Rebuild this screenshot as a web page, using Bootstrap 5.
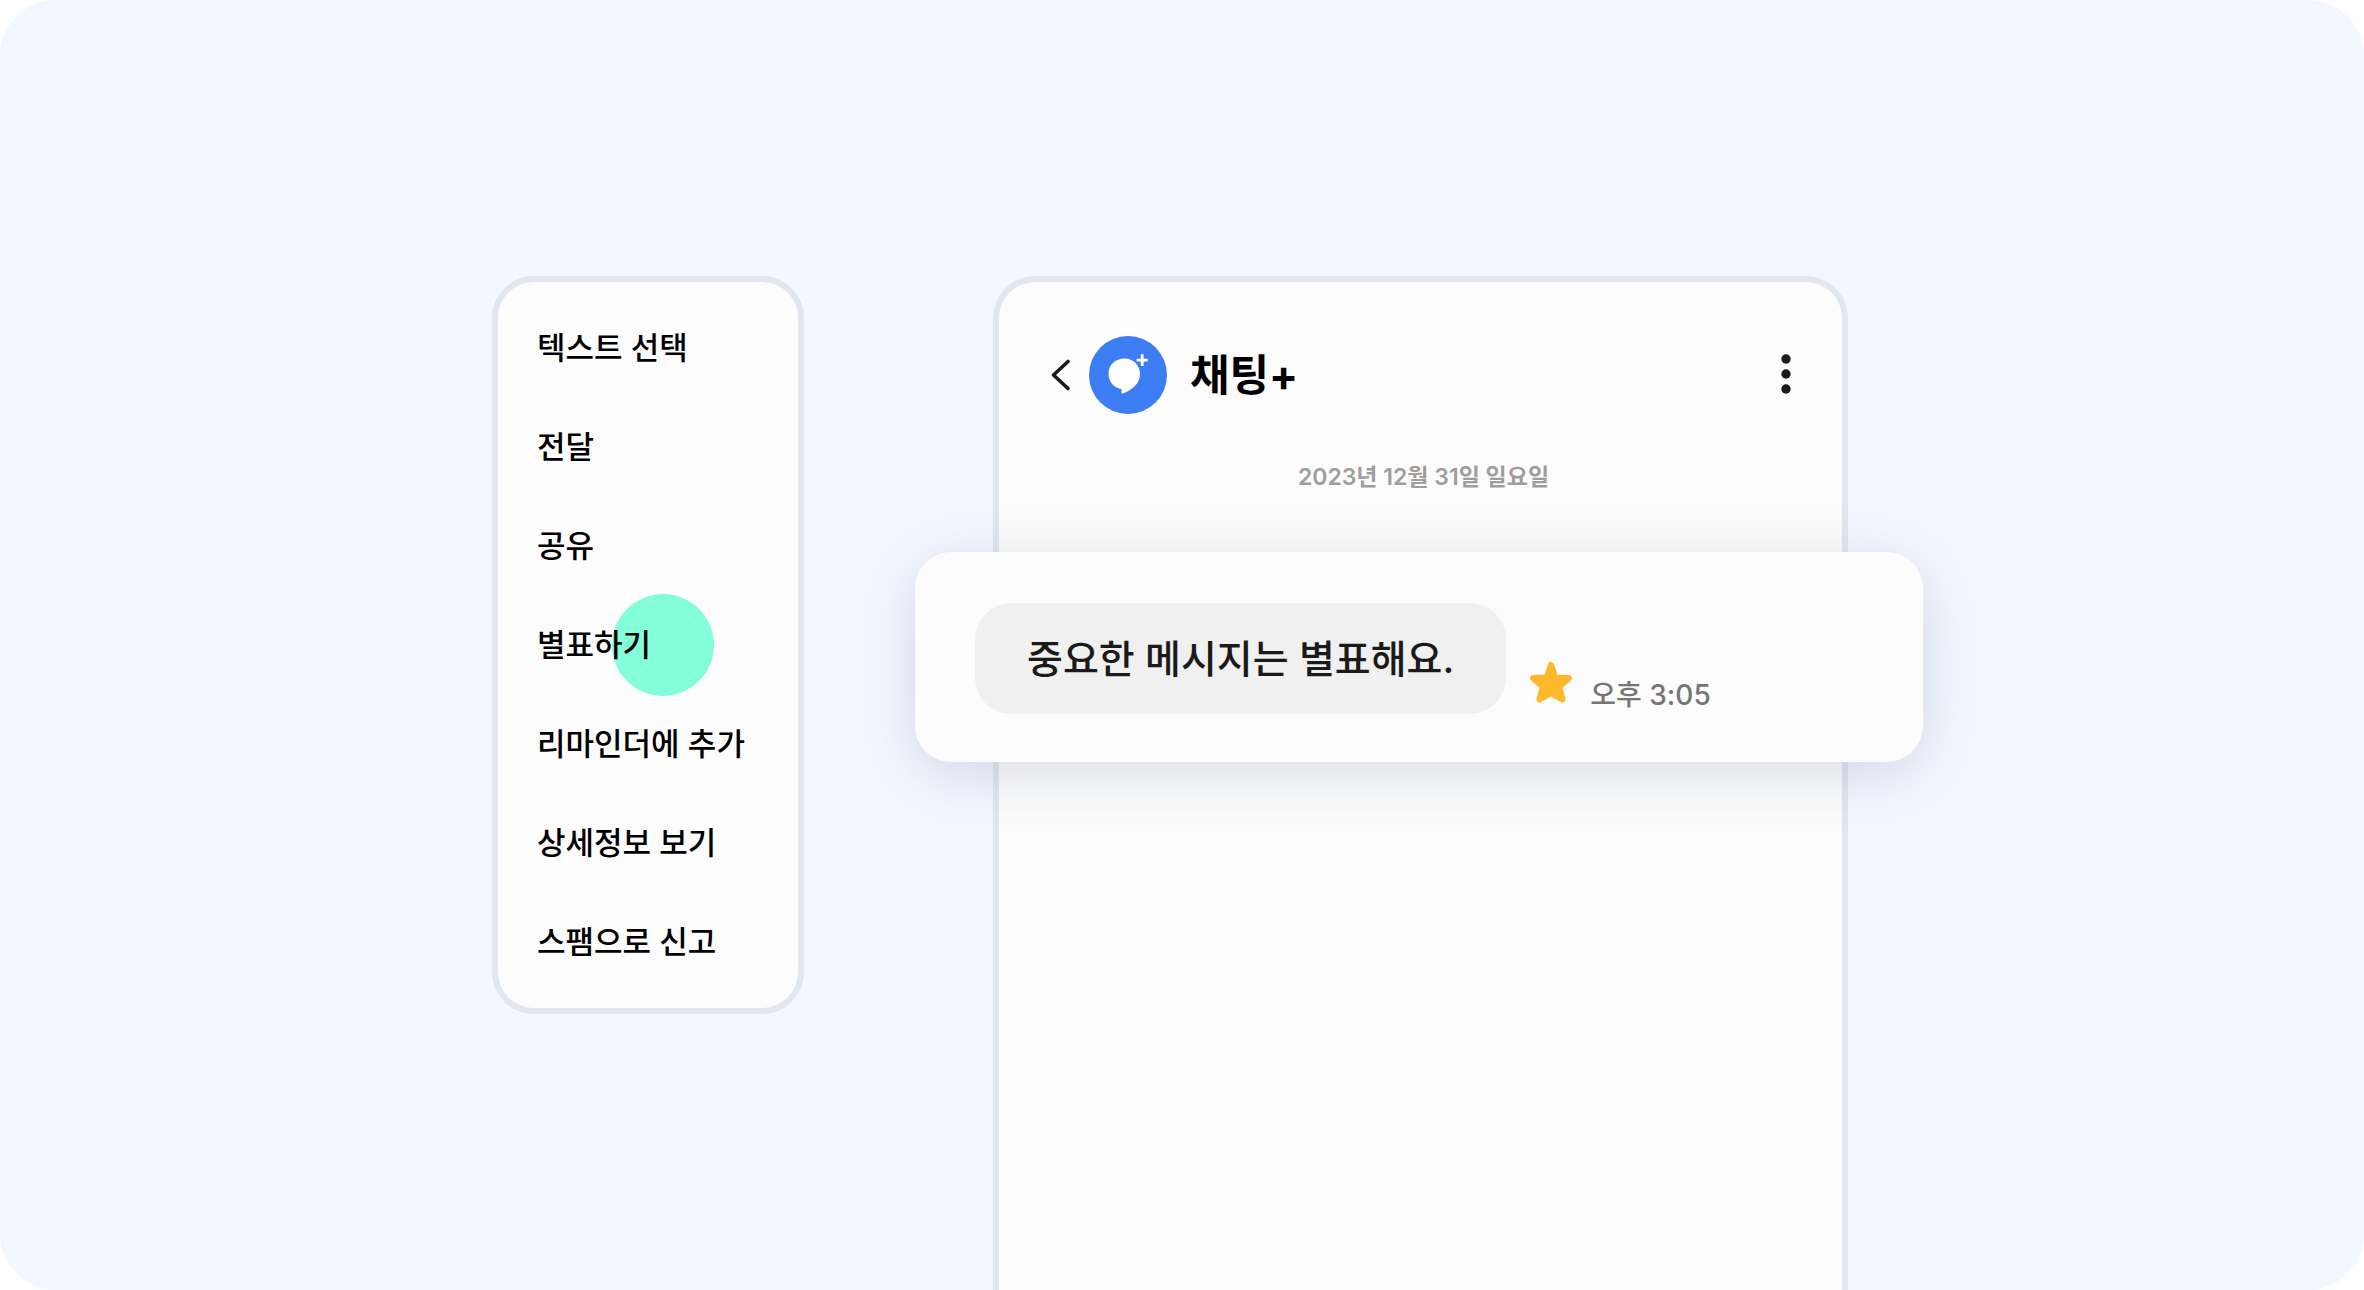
<!DOCTYPE html>
<html lang="ko">
<head>
<meta charset="utf-8">
<meta name="viewport" content="width=device-width, initial-scale=1">
<title>채팅+</title>
<link href="https://cdn.jsdelivr.net/npm/bootstrap@5.3.0/dist/css/bootstrap.min.css" rel="stylesheet">
<style>
  body { background: #fff; font-family: Inter, "Noto Sans CJK KR", sans-serif; color: #000; }
  .stage { min-height: 100vh; background: #f3f7ff; border-radius: 56px; padding: 276px 24px 0 0; gap: 189px; }
  .panel { background: #fcfcfc; border: 6px solid #e2e6ef; border-radius: 42px; }
  .menu-panel { width: 312px; padding: 16px 0 17px; }
  .menu-panel .list-group-item { height: 99px; padding: 0 0 0 39px; border: 0; background: none; color: #000; font-size: 31px; line-height: 36px; font-weight: 500; isolation: isolate; }
  .tap-target::before { content: ""; position: absolute; z-index: -1; left: 114px; top: -1px; width: 102px; height: 102px; border-radius: 50%; background: #84fdd9; }
  .phone { width: 855px; padding-top: 54px; border-bottom: 0; border-radius: 42px 42px 0 0; }
  .chat-head { padding: 0 36px 0 45px; gap: 12px; }
  .chat-head .btn { width: 32px; height: 48px; padding: 0; border: 0; margin-right: 1px; }
  .chat-head .more { width: 40px; margin-right: 0; }
  .chat-title { margin: 0 0 0 11px; font-size: 43px; line-height: 54px; font-weight: 700; }
  .chat-date { margin: 48px 0 60px; padding-left: 6px; font-size: 23px; line-height: 30px; font-weight: 600; color: #9e9e9e; }
  .spotlight { margin: 0 -81px 0 -84px; padding: 51px 60px 48px; border-radius: 36px; background: #fcfcfc; box-shadow: 0 12px 60px rgba(60, 80, 120, .18); }
  .bubble { padding: 0 52px; border-radius: 36px; background: #f0f0f0; color: #1a1a1a; font-size: 39px; line-height: 111px; font-weight: 500; white-space: nowrap; }
  .star { margin: 0 18px 11px 24px; }
  .sent-at { font-size: 28px; line-height: 38px; font-weight: 500; color: #757575; }
</style>
</head>
<body>
<main class="stage d-flex justify-content-center overflow-hidden">
  <nav class="panel menu-panel list-group align-self-start flex-shrink-0" aria-label="메시지 메뉴">
    <button type="button" class="list-group-item list-group-item-action">텍스트 선택</button>
    <button type="button" class="list-group-item list-group-item-action">전달</button>
    <button type="button" class="list-group-item list-group-item-action">공유</button>
    <button type="button" class="list-group-item list-group-item-action tap-target">별표하기</button>
    <button type="button" class="list-group-item list-group-item-action">리마인더에 추가</button>
    <button type="button" class="list-group-item list-group-item-action">상세정보 보기</button>
    <button type="button" class="list-group-item list-group-item-action">스팸으로 신고</button>
  </nav>
  <section class="panel phone flex-shrink-0">
    <header class="chat-head d-flex align-items-center">
      <button type="button" class="btn d-flex align-items-center justify-content-center" aria-label="뒤로">
        <svg width="20" height="32" viewBox="0 0 20 32" fill="none" stroke="#1a1a1a" stroke-width="3.6" stroke-linecap="round" stroke-linejoin="round"><path d="M18 2.5 3.5 16 18 29.5"/></svg>
      </button>
      <svg width="78" height="78" viewBox="0 0 78 78" aria-hidden="true">
        <circle cx="39" cy="39" r="39" fill="#3c7df3"/>
        <path fill="#fff" d="M35.3 22.6c-9 0-15.8 6.6-15.8 15.2 0 8 5.600 14.400 13 15.200v3.700c0 .8.600 1.100 1.300.8C42.500 54.200 51 48 51 38.200 51 29.200 44.300 22.600 35.300 22.600z"/>
        <path stroke="#fff" stroke-width="2.800" d="M53.200 18.300v11.600M47.600 24.100h11.200"/>
      </svg>
      <h1 class="chat-title">채팅+</h1>
      <button type="button" class="btn more ms-auto d-flex align-items-center justify-content-center" aria-label="더보기">
        <svg width="12" height="42" viewBox="0 0 12 42" fill="#1a1a1a"><circle cx="6" cy="5" r="4.700"/><circle cx="6" cy="20" r="4.700"/><circle cx="6" cy="35" r="4.700"/></svg>
      </button>
    </header>
    <p class="chat-date text-center">2023년 12월 31일 일요일</p>
    <article class="spotlight position-relative d-flex align-items-end">
      <div class="bubble">중요한 메시지는 별표해요.</div>
      <svg class="star" width="42" height="41" viewBox="0 0 42 41" role="img" aria-label="별표"><path fill="#ffb72b" stroke="#ffb72b" stroke-width="6.400" stroke-linejoin="round" d="M21 3.200 25.200 15.800 38.700 16.200 29 24.600 32.400 37.300 21 30.800 9.600 37.300 13 24.600 3.300 16.200 16.800 15.800z"/></svg>
      <time class="sent-at" datetime="15:05">오후 3:05</time>
    </article>
  </section>
</main>
<script src="https://cdn.jsdelivr.net/npm/bootstrap@5.3.0/dist/js/bootstrap.bundle.min.js"></script>
</body>
</html>
